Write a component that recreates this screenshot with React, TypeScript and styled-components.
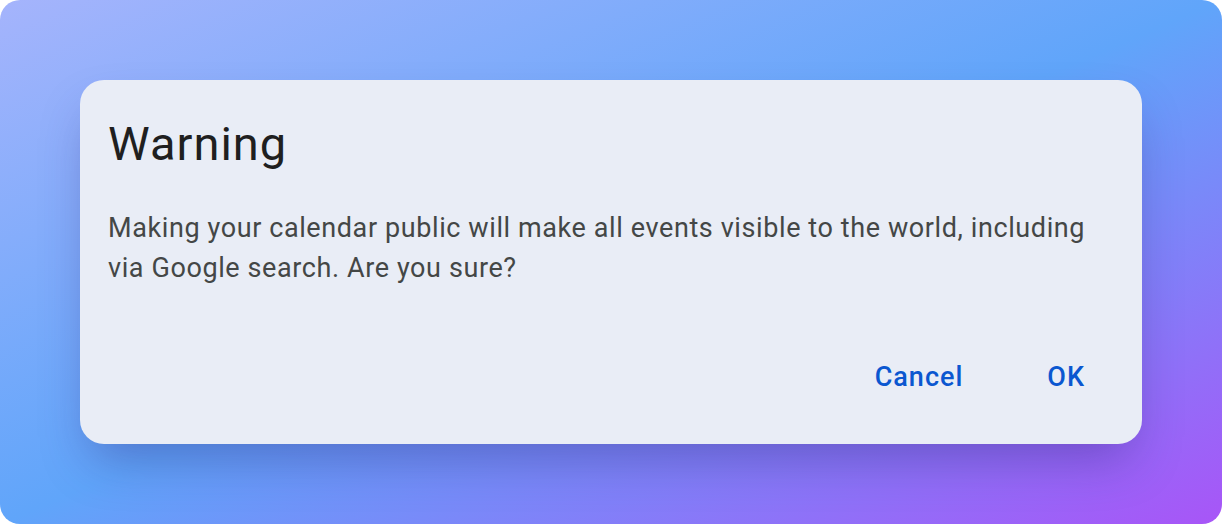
import React from "react";
import styled, { createGlobalStyle } from "styled-components";

const Global = createGlobalStyle`
  html, body { margin: 0; padding: 0; background: #ffffff; }
  * { box-sizing: border-box; }
`;

const Frame = styled.div`
  width: 1222px;
  height: 524px;
  border-radius: 20px;
  background: linear-gradient(to bottom right, #a5b4fc 0%, #60a5fa 50%, #a855f7 100%);
  padding: 80px;
  display: flex;
  font-family: Roboto, "Open Sans", sans-serif;
`;

const Dialog = styled.div`
  flex: 1;
  background: #e9edf6;
  border-radius: 24px;
  box-shadow: 0 25px 50px -12px rgba(40, 20, 110, 0.35);
  padding: 36px 28px 40px 28px;
  display: flex;
  flex-direction: column;
`;

const Title = styled.h2`
  margin: 0;
  font-size: 47px;
  line-height: 56px;
  font-weight: 400;
  letter-spacing: 1px;
  color: #1f1f1f;
`;

const Body = styled.p`
  margin: 36px 0 0 0;
  font-size: 27px;
  line-height: 40px;
  letter-spacing: 0.6px;
  color: #444746;
`;

const Actions = styled.div`
  margin-top: auto;
  margin-bottom: 7px;
  display: flex;
  justify-content: flex-end;
  gap: 44px;
  padding-right: 9px;
`;

const TextButton = styled.button`
  background: none;
  border: none;
  padding: 0 20px;
  font-family: inherit;
  font-size: 27px;
  line-height: 40px;
  font-weight: 500;
  letter-spacing: 1px;
  color: #0b57d0;
  cursor: pointer;
`;

export default function App() {
  return (
    <>
      <Global />
      <Frame>
        <Dialog>
          <Title>Warning</Title>
          <Body>
            Making your calendar public will make all events visible to the world, including via Google search. Are you sure?
          </Body>
          <Actions>
            <TextButton>Cancel</TextButton>
            <TextButton>OK</TextButton>
          </Actions>
        </Dialog>
      </Frame>
    </>
  );
}
